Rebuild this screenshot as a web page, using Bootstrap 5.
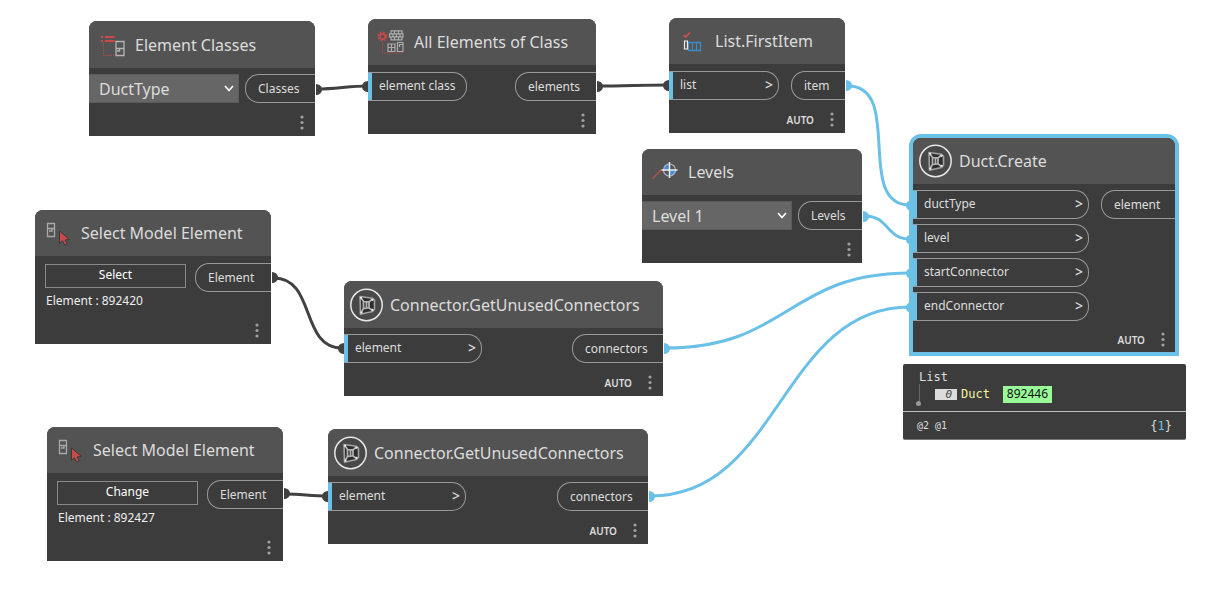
<!DOCTYPE html>
<html lang="en">
<head>
<meta charset="utf-8">
<meta name="viewport" content="width=device-width, initial-scale=1">
<title>Duct graph</title>
<link rel="stylesheet" href="https://cdn.jsdelivr.net/npm/bootstrap@5.3.0/dist/css/bootstrap.min.css">
<style>
  :root { --wire: #6ac0e7; --ink: #3c3c3c; --head: #535353; --line: #999; --text: #dcdcdc; }
  body { background: #fff; font-family: "Noto Sans", "Open Sans", sans-serif; font-size: 12px; line-height: 16px; color: var(--text); }
  .graph { overflow: hidden; }
  .wires { left: 0; top: 0; width: 1212px; height: 606px; fill: none; stroke: #414141; stroke-width: 3; }
  .wires .live { stroke: var(--wire); }
  .wires .dots { stroke: none; fill: #414141; }
  .wires .dots-live { stroke: none; fill: var(--wire); }

  /* graph nodes */
  .node { background: var(--ink); border-radius: 8px 8px 0 0; overflow: hidden; }
  .node-head { background: var(--head); height: 46px; padding: 0 6px; gap: 6px; }
  .node-head h2 { font-size: 16px; line-height: 24px; font-weight: 400; margin: 0; white-space: nowrap; }
  .node-head svg { width: 34px; height: 34px; flex: none; }
  .node-body { padding-top: 7px; }
  .high-head .node-head { height: 47px; }
  .high-head .node-body, #levels .node-body, #duct .node-body { padding-top: 6px; }
  .node-foot { height: 33px; padding: 6px 9px 0 0; gap: 14px; font-size: 10px; font-weight: 600; }
  .tall-foot { height: 35px; padding: 8px 10px 0 0; }
  #duct .node-foot { height: 31px; padding-right: 8px; }
  .ports { gap: 5px; }
  .arrow { font-size: 14px; font-weight: 500; }
  .more { border: 0; background: none; padding: 0; width: 8px; height: 16px; display: flex; }
  .more svg { width: 8px; height: 16px; fill: #a0a0a0; }
  .port-in, .port-out { height: 29px; border: 1px solid var(--line); }
  .port-in { border-left: 0; border-radius: 0 14px 14px 0; padding: 0 5px 2px 11px; box-shadow: inset 4px 0 var(--wire); }
  .port-out { border-right: 0; border-radius: 14px 0 0 14px; padding-left: 12px; }
  .w-xs { width: 54px; } .w-sm { width: 64px; } .w-md { width: 70px; } .w-lg { width: 76px; } .w-xl { width: 81px; } .w-xxl { width: 91px; }
  #duct .port-out { width: 74px; }
  .in-sm { width: 99px; } .in-md { width: 110px; } .in-lg { width: 138px; } .in-xl { width: 176px; }
  .pick { width: 150px; height: 29px; border: 1px solid #5c5c5c; border-left: 0; border-radius: 0; color: var(--text); font-size: 16px; line-height: 24px; padding: 1px 24px 0 10px;
    background: #666 url("data:image/svg+xml,%3Csvg xmlns='http://www.w3.org/2000/svg' viewBox='0 0 10 7'%3E%3Cpath d='M1 1l4 4.5L9 1' fill='none' stroke='white' stroke-width='1.6'/%3E%3C/svg%3E") no-repeat right 4px center / 10px 7px; }
  .act { width: 141px; height: 24px; margin: 1px 0 0 10px; border: 1px solid #8a8a8a; background: transparent; color: #fff; padding: 0 0 3px; }
  .elem-id { margin: 5px 0 0 11px; color: #eee; }

  #classes { left: 89px; top: 21px; width: 226px; }
  #all-elements { left: 368px; top: 19px; width: 228px; }
  #first-item { left: 669px; top: 18px; width: 176px; }
  #levels { left: 642px; top: 149px; width: 220px; }
  #select-a { left: 35px; top: 210px; width: 236px; }
  #select-b { left: 47px; top: 427px; width: 236px; }
  #unused-a { left: 344px; top: 281px; width: 319px; }
  #unused-b { left: 328px; top: 429px; width: 320px; }
  #duct { left: 909px; top: 134px; width: 270px; border: 4px solid var(--wire); border-radius: 12px 12px 0 0; }
  #preview { left: 903px; top: 364px; width: 283px; background: var(--ink); border-bottom: 1px solid #777; border-radius: 2px; font-family: "DejaVu Sans Mono", "Liberation Mono", monospace; }
  .tree { height: 47px; padding: 5px 16px 0; }
  .branch { height: 18px; }
  .branch::before { content: ""; position: absolute; left: 0; top: -1px; height: 20px; border-left: 1px solid #666; }
  .branch::after { content: ""; position: absolute; left: -3px; top: 16px; width: 5px; height: 5px; border-radius: 50%; background: #999; }
  .idx { background: #dcdcdc; color: #444; width: 22px; height: 11px; line-height: 11px; font-size: 11px; font-style: italic; padding-right: 5px; margin-left: 16px; }
  .kind { color: #f4f3a0; margin-left: 4px; }
  .guid { background: #98fb98; color: #111; font-family: "Noto Sans", sans-serif; margin-left: 13px; width: 49px; height: 17px; line-height: 16px; }
  .sum { border-top: 1px solid #bbb; height: 28px; padding: 0 14px; }
  .depth { font-size: 10px; }
  .count { color: var(--wire); }
</style>
</head>
<body>
<svg class="d-none" aria-hidden="true">
  <symbol id="i-dots" viewBox="0 0 8 16"><circle cx="4" cy="2" r="1.6"/><circle cx="4" cy="7.500" r="1.6"/><circle cx="4" cy="13" r="1.6"/></symbol>
  <symbol id="i-pick" viewBox="0 0 34 34">
    <path d="M6.500 7.500h7v13h-7zM6.500 12.500h7M8 15h3v-2" fill="none" stroke="#a9a9a9" stroke-width="1.300"/>
    <path d="M18.500 15v12.500l3-2.700 2.200 4.200 2.500-1.200-2.200-3.800 4.500-.5z" fill="#c94a48" stroke="#3a3a3a" stroke-width="1"/>
  </symbol>
  <symbol id="i-pack" viewBox="0 0 34 34">
    <circle cx="16.500" cy="17" r="15.700" fill="#484848" stroke="#e8e8e8" stroke-width="1.500"/>
    <path d="M10 8.500l12.500 1.800 2 2v9l-2 2.200-12 2.700z" fill="#2e2e2e" stroke="#a2a2a2" stroke-width="1.600" stroke-linejoin="round"/>
    <g fill="none" stroke="#b4b4b4" stroke-width="1.700">
      <path d="M13.500 13.500l5.500.3v6l-5.500.8zM16.500 13.500v6.500M10.500 9l3 4.500M22.500 11L19 13.800M10.500 25.500l3-5M22.500 22.500L19 19.800"/>
    </g>
    <g fill="#eee"><circle cx="11" cy="9.800" r="1.100"/><circle cx="22.500" cy="11.800" r="1.100"/><circle cx="11.500" cy="24.500" r="1.100"/><circle cx="22.500" cy="21.800" r="1.100"/></g>
  </symbol>
</svg>

<main class="graph position-relative min-vh-100">
  <svg class="wires position-absolute" viewBox="0 0 1212 606" aria-hidden="true">
    <path d="M318 89C334 89 351 86 367 86M599 86C622 86 645 85 668 85M274 278C316 278 300 348 342 348M286 494C300 494 312 496 327 496"/>
    <path class="live" d="M848 86C904 86 854 205 910 205M865 216C889 216 886 239 910 239M666 348C788 348 788 273 910 273M651 496C780 496 781 307 910 307"/>
    <path class="dots" d="M316 84a6 5.500 0 010 11zM597 81a6 5.500 0 010 11zM272 272a6 5.500 0 010 11zM284 488a6 5.500 0 010 11zM368 81a6 5.500 0 000 11zM669 80a6 5.500 0 000 11zM344 343a6 5.500 0 000 11zM328 491a6 5.500 0 000 11z"/>
    <path class="dots-live" d="M846 80a6 5.500 0 010 11zM863 211a6 5.500 0 010 11zM664 343a6 5.500 0 010 11zM649 491a6 5.500 0 010 11zM912 200a6 5.500 0 000 11zM912 234a6 5.500 0 000 11zM912 268a6 5.500 0 000 11zM912 302a6 5.500 0 000 11z"/>
  </svg>

  <section class="node high-head position-absolute" id="classes">
    <header class="node-head d-flex align-items-center">
      <svg viewBox="0 0 34 34"><path d="M6 8h2v2H6zM10 8h9.500v2H10zM6 12h2v2H6zM10 12h9.500v2H10z" fill="#c94a48"/><path d="M8.500 14.500v13h12" fill="none" stroke="#b04a48" stroke-dasharray="1.500 1"/><path d="M21 13.500h8v14h-8zM21 20.500h8M22 23h2.500v-2" fill="none" stroke="#b5b5b5" stroke-width="1.300"/></svg>
      <h2>Element Classes</h2>
    </header>
    <div class="node-body">
      <div class="d-flex justify-content-between">
        <select class="form-select pick" aria-label="Element class"><option>DuctType</option></select>
        <div class="port-out w-md d-flex align-items-center">Classes</div>
      </div>
      <footer class="node-foot d-flex align-items-center justify-content-end"><button class="more" aria-label="More"><svg><use href="#i-dots"/></svg></button></footer>
    </div>
  </section>

  <section class="node position-absolute" id="all-elements">
    <header class="node-head d-flex align-items-center">
      <svg viewBox="0 0 34 34"><circle cx="8.500" cy="11.500" r="4" fill="none" stroke="#c94a48" stroke-width="2" stroke-dasharray="1.800 1.340"/><circle cx="8.500" cy="11.500" r="2.600" fill="none" stroke="#c94a48" stroke-width="1.500"/><path d="M8.500 17v11h21" fill="none" stroke="#b04a48" stroke-dasharray="1.500 1"/><g fill="none" stroke="#adadad" stroke-width="1.200"><path d="M17 5.800h11v3H17zM15.500 8.800h13.500v3H15.500zM17 11.800h11v3H17zM20.500 6v3M24.500 6v3M19 9v3M22.500 9v3M26 9v3M20.500 12v3M24.500 12v3M14 19h7v7.500h-7zM17.500 19v7.500M14 22.500h7M23.500 17.500h5.500v9h-5.500zM25.500 22v-2.500h3"/></g></svg>
      <h2>All Elements of Class</h2>
    </header>
    <div class="node-body">
      <div class="d-flex justify-content-between">
        <div class="port-in in-sm d-flex align-items-center">element class</div>
        <div class="port-out w-xl d-flex align-items-center">elements</div>
      </div>
      <footer class="node-foot d-flex align-items-center justify-content-end"><button class="more" aria-label="More"><svg><use href="#i-dots"/></svg></button></footer>
    </div>
  </section>

  <section class="node position-absolute" id="first-item">
    <header class="node-head d-flex align-items-center">
      <svg viewBox="0 0 34 34" fill="none"><path d="M8.500 11l2 2 4.500-4.500" stroke="#d0504e" stroke-width="1.600"/><path d="M13.500 18.500h12v8h-12zM17.500 18.500v8M21.500 18.500v8" stroke="#3f8ac4" stroke-width="1.300"/><path d="M9.500 17h3v8h-3z" stroke="#eee" stroke-width="1.200"/></svg>
      <h2>List.FirstItem</h2>
    </header>
    <div class="node-body">
      <div class="d-flex justify-content-between">
        <div class="port-in in-md d-flex align-items-center justify-content-between"><span>list</span><span class="arrow">&gt;</span></div>
        <div class="port-out w-xs d-flex align-items-center">item</div>
      </div>
      <footer class="node-foot d-flex align-items-center justify-content-end"><span>AUTO</span><button class="more" aria-label="More"><svg><use href="#i-dots"/></svg></button></footer>
    </div>
  </section>

  <section class="node position-absolute" id="levels">
    <header class="node-head d-flex align-items-center">
      <svg viewBox="0 0 34 34" fill="none"><path d="M4.500 23.500l9-9" stroke="#b8504e" stroke-width="1.500"/><path d="M21.500 9a6 6 0 00-6 6h6zM21.500 21a6 6 0 006-6h-6z" fill="#3f8fd6"/><circle cx="21.500" cy="15" r="6" stroke="#a9b4be" stroke-width="1.200"/><path d="M21.500 7v16M13.500 15h16" stroke="#eee" stroke-width="1.500"/></svg>
      <h2>Levels</h2>
    </header>
    <div class="node-body">
      <div class="d-flex justify-content-between">
        <select class="form-select pick" aria-label="Level"><option>Level 1</option></select>
        <div class="port-out w-sm d-flex align-items-center">Levels</div>
      </div>
      <footer class="node-foot d-flex align-items-center justify-content-end"><button class="more" aria-label="More"><svg><use href="#i-dots"/></svg></button></footer>
    </div>
  </section>

  <section class="node position-absolute" id="select-a">
    <header class="node-head d-flex align-items-center"><svg><use href="#i-pick"/></svg><h2>Select Model Element</h2></header>
    <div class="node-body">
      <div class="d-flex justify-content-between align-items-start">
        <div><button class="act">Select</button><p class="elem-id">Element : 892420</p></div>
        <div class="port-out w-lg d-flex align-items-center">Element</div>
      </div>
      <footer class="node-foot tall-foot d-flex align-items-center justify-content-end"><button class="more" aria-label="More"><svg><use href="#i-dots"/></svg></button></footer>
    </div>
  </section>

  <section class="node position-absolute" id="select-b">
    <header class="node-head d-flex align-items-center"><svg><use href="#i-pick"/></svg><h2>Select Model Element</h2></header>
    <div class="node-body">
      <div class="d-flex justify-content-between align-items-start">
        <div><button class="act">Change</button><p class="elem-id">Element : 892427</p></div>
        <div class="port-out w-lg d-flex align-items-center">Element</div>
      </div>
      <footer class="node-foot tall-foot d-flex align-items-center justify-content-end"><button class="more" aria-label="More"><svg><use href="#i-dots"/></svg></button></footer>
    </div>
  </section>

  <section class="node high-head position-absolute" id="unused-a">
    <header class="node-head d-flex align-items-center"><svg><use href="#i-pack"/></svg><h2>Connector.GetUnusedConnectors</h2></header>
    <div class="node-body">
      <div class="d-flex justify-content-between">
        <div class="port-in in-lg d-flex align-items-center justify-content-between"><span>element</span><span class="arrow">&gt;</span></div>
        <div class="port-out w-xxl d-flex align-items-center">connectors</div>
      </div>
      <footer class="node-foot d-flex align-items-center justify-content-end"><span>AUTO</span><button class="more" aria-label="More"><svg><use href="#i-dots"/></svg></button></footer>
    </div>
  </section>

  <section class="node high-head position-absolute" id="unused-b">
    <header class="node-head d-flex align-items-center"><svg><use href="#i-pack"/></svg><h2>Connector.GetUnusedConnectors</h2></header>
    <div class="node-body">
      <div class="d-flex justify-content-between">
        <div class="port-in in-lg d-flex align-items-center justify-content-between"><span>element</span><span class="arrow">&gt;</span></div>
        <div class="port-out w-xxl d-flex align-items-center">connectors</div>
      </div>
      <footer class="node-foot d-flex align-items-center justify-content-end"><span>AUTO</span><button class="more" aria-label="More"><svg><use href="#i-dots"/></svg></button></footer>
    </div>
  </section>

  <section class="node position-absolute" id="duct">
    <header class="node-head d-flex align-items-center"><svg><use href="#i-pack"/></svg><h2>Duct.Create</h2></header>
    <div class="node-body">
      <div class="d-flex justify-content-between align-items-start">
        <div class="ports d-grid">
          <div class="port-in in-xl d-flex align-items-center justify-content-between"><span>ductType</span><span class="arrow">&gt;</span></div>
          <div class="port-in in-xl d-flex align-items-center justify-content-between"><span>level</span><span class="arrow">&gt;</span></div>
          <div class="port-in in-xl d-flex align-items-center justify-content-between"><span>startConnector</span><span class="arrow">&gt;</span></div>
          <div class="port-in in-xl d-flex align-items-center justify-content-between"><span>endConnector</span><span class="arrow">&gt;</span></div>
        </div>
        <div class="port-out d-flex align-items-center">element</div>
      </div>
      <footer class="node-foot d-flex align-items-center justify-content-end"><span>AUTO</span><button class="more" aria-label="More"><svg><use href="#i-dots"/></svg></button></footer>
    </div>
  </section>

  <section class="position-absolute" id="preview">
    <div class="tree">
      <div>List</div>
      <div class="branch position-relative d-flex align-items-center"><span class="idx text-end">0</span><span class="kind">Duct</span><a class="guid text-center text-decoration-none" href="#duct">892446</a></div>
    </div>
    <div class="sum d-flex align-items-center justify-content-between"><span class="depth">@2 @1</span><span>{<span class="count">1</span>}</span></div>
  </section>
</main>
<script src="https://cdn.jsdelivr.net/npm/bootstrap@5.3.0/dist/js/bootstrap.bundle.min.js"></script>
</body>
</html>
